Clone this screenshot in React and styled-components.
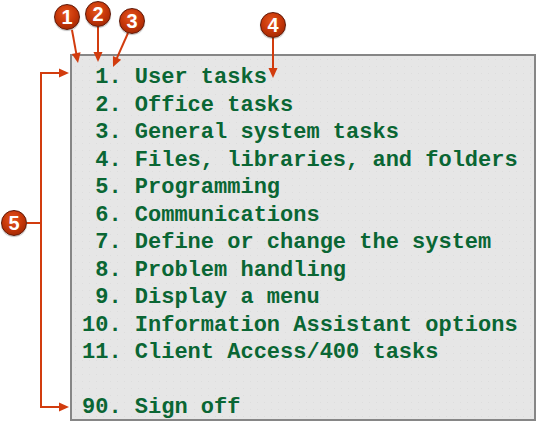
import React from "react";
import styled, { createGlobalStyle } from "styled-components";

const GlobalStyle = createGlobalStyle`
  html, body {
    margin: 0;
    padding: 0;
    background: #ffffff;
  }
`;

const Canvas = styled.div`
  position: relative;
  width: 537px;
  height: 422px;
  overflow: hidden;
  background: #ffffff;
  padding: 54px 0 0 70px;
  box-sizing: border-box;
`;

const Screen = styled.div`
  width: 466px;
  height: 367px;
  box-sizing: border-box;
  border: 2px solid #868686;
  background-color: #e6e6e6;
  background-image: radial-gradient(#dddddd 0.8px, transparent 0.9px);
  background-size: 7px 7px;
  padding: 8px 0 0 10px;
`;

const MenuList = styled.pre`
  margin: 0;
  font-family: "Liberation Mono", "Courier New", monospace;
  font-weight: bold;
  font-size: 22px;
  line-height: 27.5px;
  color: #0a6634;
  white-space: pre;
`;

const Badge = styled.div`
  position: absolute;
  left: ${(p) => p.$x - 13}px;
  top: ${(p) => p.$y - 13}px;
  width: 26px;
  height: 26px;
  box-sizing: border-box;
  border-radius: 50%;
  border: 1px solid #5e1604;
  background: radial-gradient(
    circle at 45% 35%,
    #e4561e 0%,
    #c8380a 45%,
    #9e2603 85%,
    #7a1b02 100%
  );
  box-shadow: 0 1px 1px rgba(0, 0, 0, 0.25);
  color: #ffffff;
  font-family: "Liberation Sans", Arial, sans-serif;
  font-weight: bold;
  font-size: 20px;
  line-height: 24px;
  text-align: center;
`;

const Overlay = styled.svg`
  position: absolute;
  left: 0;
  top: 0;
  pointer-events: none;
`;

const items = [
  " 1. User tasks",
  " 2. Office tasks",
  " 3. General system tasks",
  " 4. Files, libraries, and folders",
  " 5. Programming",
  " 6. Communications",
  " 7. Define or change the system",
  " 8. Problem handling",
  " 9. Display a menu",
  "10. Information Assistant options",
  "11. Client Access/400 tasks",
  "",
  "90. Sign off",
];

const badges = [
  { n: 1, x: 67, y: 17 },
  { n: 2, x: 98, y: 14 },
  { n: 3, x: 132, y: 21 },
  { n: 4, x: 273, y: 25 },
  { n: 5, x: 14, y: 223 },
];

const RED = "#d23c0e";

// arrowhead at tip (x,y) pointing along angle a (radians)
const head = (x, y, a, len = 10, w = 4.5) => {
  const bx = x - Math.cos(a) * len;
  const by = y - Math.sin(a) * len;
  const px = -Math.sin(a) * w;
  const py = Math.cos(a) * w;
  return `${x},${y} ${bx + px},${by + py} ${bx - px},${by - py}`;
};

const Arrow = ({ x1, y1, x2, y2 }) => {
  const a = Math.atan2(y2 - y1, x2 - x1);
  const ex = x2 - Math.cos(a) * 8;
  const ey = y2 - Math.sin(a) * 8;
  return (
    <g>
      <line x1={x1} y1={y1} x2={ex} y2={ey} stroke={RED} strokeWidth="2" />
      <polygon points={head(x2, y2, a)} fill={RED} />
    </g>
  );
};

const Callouts = () => (
  <Overlay width="537" height="422" viewBox="0 0 537 422">
    <Arrow x1={72} y1={30} x2={78} y2={63} />
    <Arrow x1={98} y1={27} x2={98} y2={62} />
    <Arrow x1={128} y1={33} x2={113} y2={67} />
    <Arrow x1={273} y1={38} x2={273} y2={78} />
    <polyline
      points="60,73 41,73 41,407 60,407"
      fill="none"
      stroke={RED}
      strokeWidth="2"
    />
    <polygon points={head(69, 73, 0)} fill={RED} />
    <polygon points={head(69, 407, 0)} fill={RED} />
    <line x1={27} y1={223} x2={41} y2={223} stroke={RED} strokeWidth="2" />
  </Overlay>
);

export default function App() {
  return (
    <>
      <GlobalStyle />
      <Canvas>
        <Screen>
          <MenuList>{items.join("\n")}</MenuList>
        </Screen>
        <Callouts />
        {badges.map((b) => (
          <Badge key={b.n} $x={b.x} $y={b.y}>
            {b.n}
          </Badge>
        ))}
      </Canvas>
    </>
  );
}
